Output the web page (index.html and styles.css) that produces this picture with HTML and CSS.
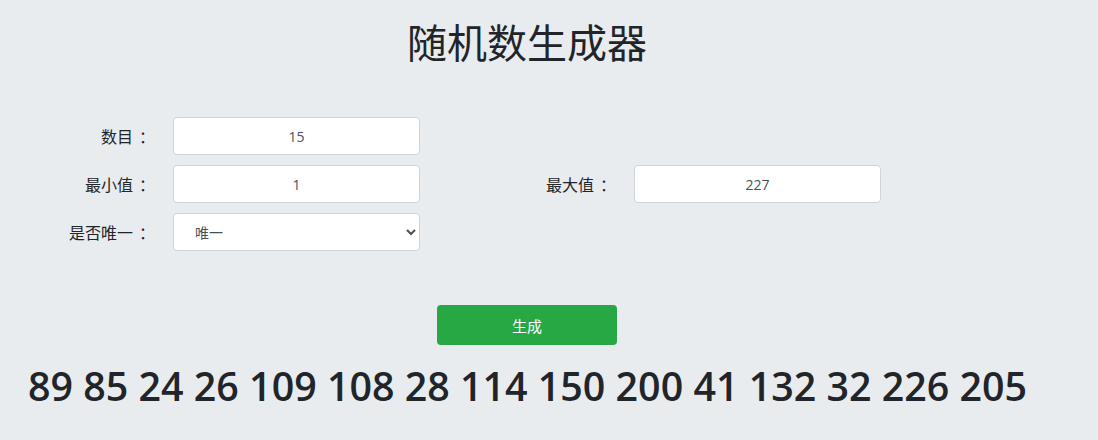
FILE: index.html
```html
<!DOCTYPE html>
<html lang="zh-CN">
<head>
    <meta charset="UTF-8">
    <meta name="viewport" content="width=device-width, initial-scale=1.0">
    <title>随机数生成器</title>
    <link rel="stylesheet" href="styles.css">
</head>
<body>
    <h1 class="title">随机数生成器</h1>

    <form class="options">
        <label for="count">数目<span class="colon">：</span></label>
        <input type="text" id="count" value="15">
        <span></span>
        <span></span>

        <label for="min">最小值<span class="colon">：</span></label>
        <input type="text" id="min" value="1">
        <label for="max">最大值<span class="colon">：</span></label>
        <input type="text" id="max" value="227">

        <label for="unique">是否唯一<span class="colon">：</span></label>
        <select id="unique">
            <option value="1">唯一</option>
            <option value="0">不唯一</option>
        </select>
    </form>

    <div class="actions">
        <button type="button" class="btn-generate">生成</button>
    </div>

    <div class="result">89 85 24 26 109 108 28 114 150 200 41 132 32 226 205</div>
</body>
</html>
```

FILE: styles.css
```css
* {
    box-sizing: border-box;
    margin: 0;
    padding: 0;
}

body {
    font-family: "Open Sans", "Noto Sans CJK SC", sans-serif;
    background-color: #e9ecef;
    color: #212529;
    width: 1098px;
    height: 440px;
    overflow: hidden;
}

.title {
    padding-top: 17px;
    width: 1054px;
    text-align: center;
    font-family: "Noto Sans CJK SC", sans-serif;
    font-size: 40px;
    font-weight: 400;
    line-height: 48px;
}

.options {
    display: grid;
    grid-template-columns: 149px 247px 166px 247px;
    grid-auto-rows: 38px;
    column-gap: 24px;
    row-gap: 10px;
    margin-top: 52px;
}

.options label {
    text-align: right;
    align-self: center;
    font-family: "Noto Sans CJK SC", sans-serif;
    font-size: 16px;
    line-height: 24px;
    color: #212529;
}

/* full-width colon drawn in the middle of its box */
.options .colon {
    display: inline-block;
    width: 16px;
    padding-left: 6px;
    white-space: nowrap;
}

.options input,
.options select {
    width: 100%;
    height: 38px;
    border: 1px solid #ced4da;
    border-radius: 4px;
    background: #fff;
    font-family: "Open Sans", "Noto Sans CJK SC", sans-serif;
    font-size: 14px;
    color: #495057;
}

.options input {
    text-align: center;
}

.options select {
    padding-left: 17px;
    padding-right: 8px;
    font-family: "Noto Sans CJK SC", sans-serif;
}

.actions {
    width: 1054px;
    display: flex;
    justify-content: center;
    margin-top: 54px;
}

.btn-generate {
    width: 180px;
    height: 40px;
    background-color: #28a745;
    color: #fff;
    border: none;
    border-radius: 4px;
    font-family: "Noto Sans CJK SC", sans-serif;
    font-size: 15px;
    cursor: pointer;
}

.btn-generate:hover {
    background-color: #218838;
}

.result {
    margin-top: 17px;
    padding-left: 28px;
    font-size: 39.4px;
    font-weight: 600;
    line-height: 48px;
    white-space: nowrap;
}
```
